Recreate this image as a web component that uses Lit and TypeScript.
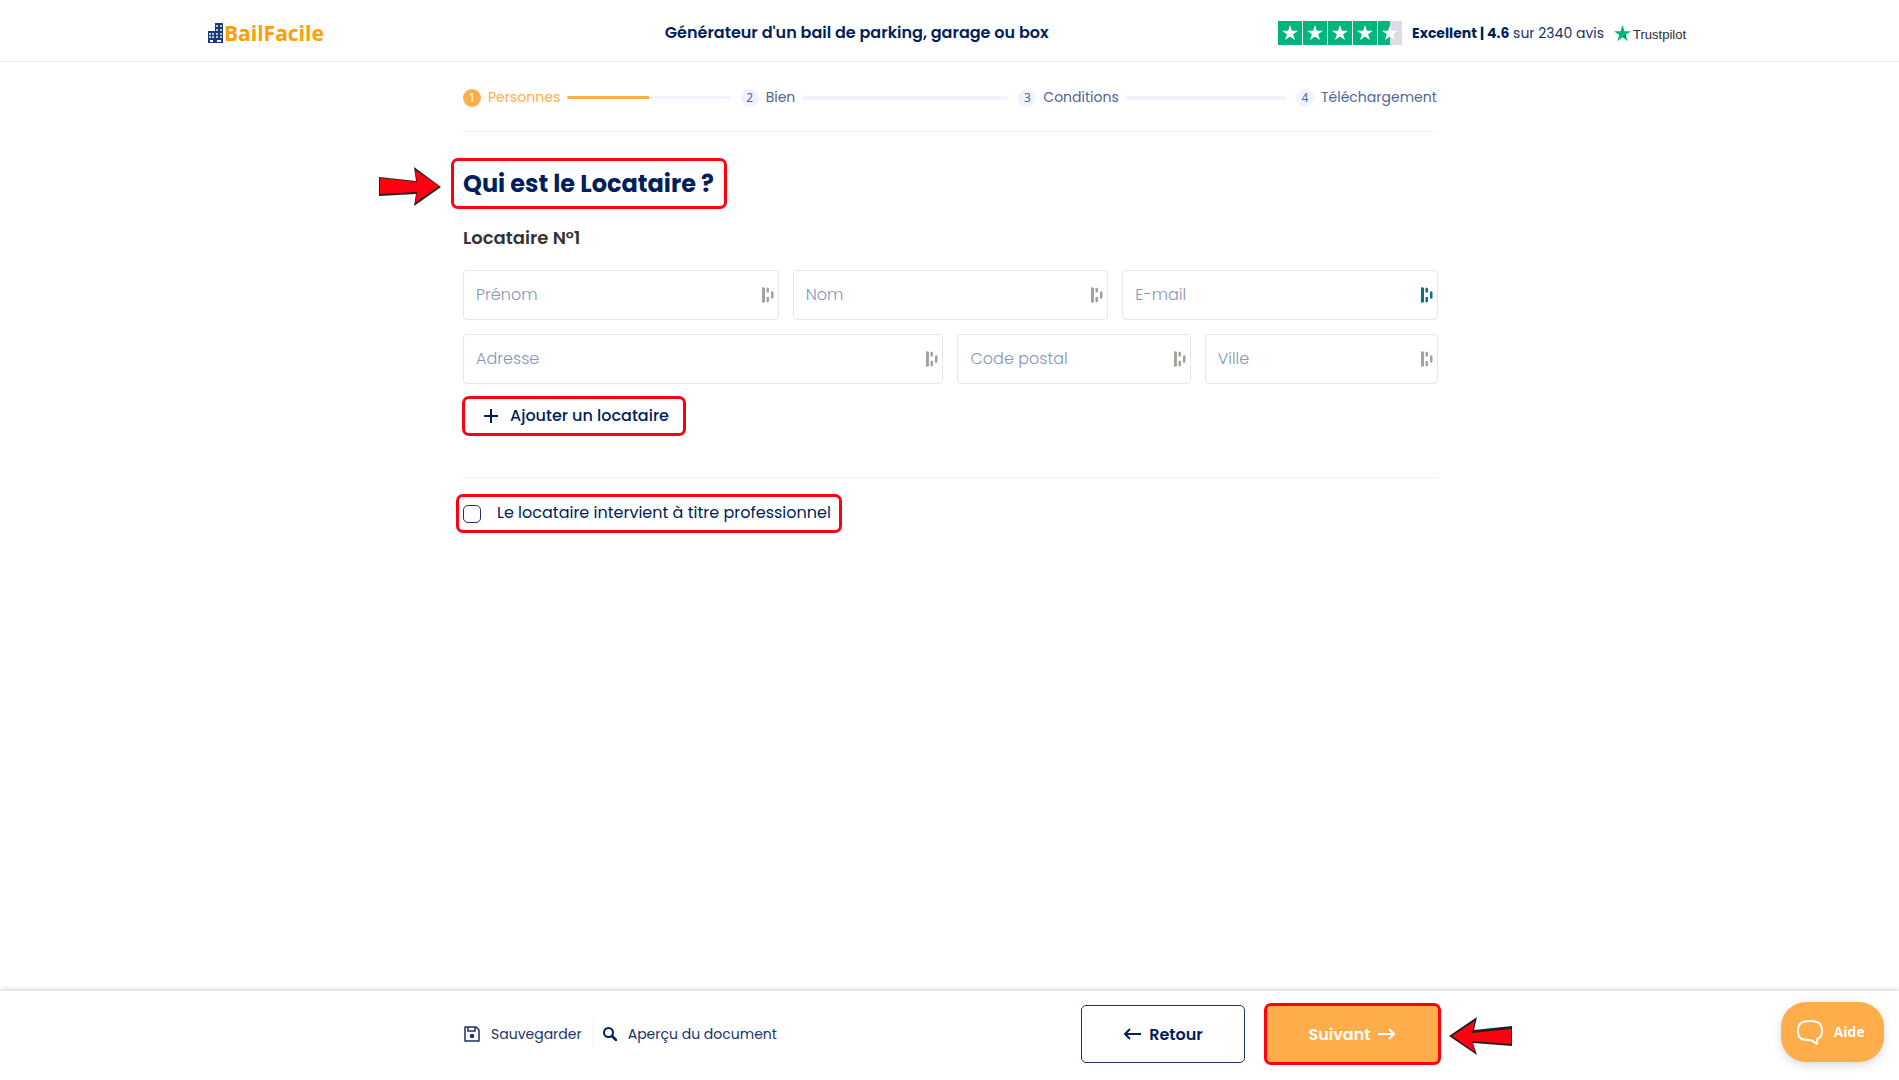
import { LitElement, html, css, svg } from "lit";
import { customElement, property } from "lit/decorators.js";
import { classMap } from "lit/directives/class-map.js";

interface Step {
  label: string;
  progress: number;
}

interface Field {
  id: string;
  label: string;
  span: string;
  type: string;
  active?: boolean;
}

const STEPS: Step[] = [
  { label: "Personnes", progress: 50 },
  { label: "Bien", progress: 0 },
  { label: "Conditions", progress: 0 },
  { label: "Téléchargement", progress: 0 },
];

const FIELDS: Field[] = [
  { id: "prenom", label: "Prénom", span: "third", type: "text" },
  { id: "nom", label: "Nom", span: "third", type: "text" },
  { id: "email", label: "E-mail", span: "third", type: "email", active: true },
  { id: "adresse", label: "Adresse", span: "half", type: "text" },
  { id: "code-postal", label: "Code postal", span: "quarter", type: "text" },
  { id: "ville", label: "Ville", span: "quarter", type: "text" },
];

const STAR = "M12 4l1.900 5.700h6.100l-4.900 3.600 1.900 5.700-5-3.500-5 3.500 1.900-5.700L4 9.700h6.100z";

@customElement("site-header")
export class SiteHeader extends LitElement {
  static styles = css`
    :host {
      display: block;
      border-bottom: 1px solid #e6e6e6;
    }
    .inner {
      display: grid;
      grid-template-columns: 2fr 3fr 3fr;
      align-items: center;
      max-width: 1485px;
      height: 61px;
      margin: 0 auto;
      padding-top: 5px;
      box-sizing: border-box;
    }
    .logo {
      display: inline-flex;
      align-items: center;
      justify-self: start;
      gap: 1px;
      color: #ff9d0a;
      font: 700 21px/24px "Open Sans", sans-serif;
      text-decoration: none;
    }
    .title {
      margin: 0;
      text-align: center;
      color: #001f5c;
      font-size: 16px;
      font-weight: 600;
      line-height: 24px;
      white-space: nowrap;
    }
    .rating {
      display: flex;
      align-items: center;
      justify-content: flex-end;
      padding-right: 6px;
      color: #1b3367;
      font-size: 14px;
      line-height: 24px;
      white-space: nowrap;
    }
    .stars {
      margin-right: 10px;
    }
    .rating strong {
      color: #001f5c;
    }
    .trust {
      display: inline-flex;
      align-items: center;
      gap: 2px;
      margin-left: 10px;
      color: #2c2c32;
      font: 400 13px/20px "Liberation Sans", sans-serif;
    }
    .brand {
      padding-top: 3px;
    }
  `;

  render() {
    return html`
      <header class="inner">
        <a class="logo" href="#">
          <svg width="16" height="20" viewBox="0 0 16 20" aria-hidden="true">
            <path fill="#1d3a72" d="M8 0h8v20H1V8h7z" />
            <path
              fill="#b9c5dc"
              d="M9 2h2v2H9zM13 2h2v2h-2zM9 6h2v2H9zM13 6h2v2h-2zM9 10h2v2H9zM13 10h2v2h-2zM2 10h2v2H2zM5 10h2v2H5zM2 13h2v2H2zM5 13h2v2H5zM9 13h2v2H9zM13 13h2v2h-2z"
            />
            <path fill="#fff" d="M3 17h3v2H3zM10 17h4v2h-4z" />
          </svg>
          <span>BailFacile</span>
        </a>
        <h1 class="title">Générateur d'un bail de parking, garage ou box</h1>
        <div class="rating">
          <svg class="stars" width="124" height="24" viewBox="0 0 124 24" role="img" aria-label="4.6 / 5">
            ${[0, 1, 2, 3, 4].map(
              (i) => svg`<g transform="translate(${i * 25} 0)">
                <path fill=${i === 4 ? "#dcdce6" : "#00b67a"} d="M0 0h24v24H0z" />
                ${i === 4 ? svg`<path fill="#00b67a" d="M0 0h12v24H0z" />` : ""}
                <path fill="#fff" d=${STAR} />
              </g>`
            )}
          </svg>
          <span><strong>Excellent | 4.6</strong> sur 2340 avis</span>
          <span class="trust">
            <svg width="17" height="17" viewBox="0 0 16 16" aria-hidden="true">
              <path fill="#00b67a" d="M8 0l1.900 5.800H16l-4.900 3.600L13 15.200 8 11.600l-5 3.600 1.900-5.800L0 5.800h6.100z" />
              <path fill="#005128" d="M11.500 10.700l-.4-1.300L8 11.600z" />
            </svg>
            <span class="brand">Trustpilot</span>
          </span>
        </div>
      </header>
    `;
  }
}

@customElement("step-bar")
export class StepBar extends LitElement {
  static styles = css`
    .steps {
      display: grid;
      grid-template-columns: repeat(3, 1fr) minmax(142px, auto);
      margin: 0;
      padding: 25px 0 23px;
      border-bottom: 1px solid #f0f3ff;
      list-style: none;
    }
    .step {
      display: flex;
      align-items: center;
      height: 21px;
      color: #4f659a;
      font-size: 14px;
      white-space: nowrap;
    }
    .number {
      width: 18px;
      margin-right: 7px;
      border-radius: 50%;
      background: #f0f3ff;
      font: 12px/18px "Noto Sans", sans-serif;
      text-align: center;
    }
    .bar {
      flex: 1;
      height: 4px;
      margin: 0 10px 0 7px;
      border-radius: 2px;
      background: #f0f3ff;
      overflow: hidden;
    }
    .fill {
      height: 3px;
      background: #ffad4a;
    }
    .current {
      color: #ffad4a;
    }
    .current .number {
      background: #ffad4a;
      color: #fff;
    }
    .current .bar {
      height: 3px;
    }
  `;

  render() {
    return html`
      <ol class="steps">
        ${STEPS.map(
          (s, i) => html`<li class=${classMap({ step: true, current: i === 0 })}>
            <span class="number">${i + 1}</span><span>${s.label}</span>
            ${i < STEPS.length - 1
              ? html`<div class="bar"><div class="fill" style="width:${s.progress}%"></div></div>`
              : ""}
          </li>`
        )}
      </ol>
    `;
  }
}

@customElement("pointer-arrow")
export class PointerArrow extends LitElement {
  @property({ type: Boolean, reflect: true }) left = false;

  static styles = css`
    :host {
      position: absolute;
      pointer-events: none;
    }
    .arrow {
      display: block;
    }
  `;

  render() {
    return this.left
      ? html`<svg class="arrow" width="64" height="40" viewBox="0 0 64 40" aria-hidden="true">
          <path fill="#231f20" d="M0 20L28 1 25 14 63 10V30L24 27l4 12z" />
          <path fill="#ff0013" d="M3 20L26 5 23 17 62 13V28L23 25l3 11z" />
        </svg>`
      : html`<svg class="arrow" width="64" height="40" viewBox="0 0 64 40" aria-hidden="true">
          <path fill="#231f20" d="M1 10L38 14 36 0 63 20 36 39 38 27 1 29z" />
          <path fill="#ff0013" d="M2 11L39 15 37 3 61 19 37 36 39 25 2 27z" />
        </svg>`;
  }
}

@customElement("tenant-form")
export class TenantForm extends LitElement {
  static styles = css`
    .heading {
      position: relative;
      width: fit-content;
      min-width: 276px;
      margin: 26px 0 0 -12px;
      padding: 1px 9px 0;
      box-sizing: border-box;
      border: 3px solid #ff0013;
      border-radius: 7px;
      color: #001f5c;
      font-size: 24px;
      font-weight: 700;
      line-height: 44px;
      white-space: nowrap;
    }
    .pointer {
      right: 100%;
      top: 6px;
      margin-right: 12px;
    }
    .subtitle {
      margin: 17px 0 20px;
      color: #333;
      font-size: 18px;
      font-weight: 600;
      line-height: 24px;
    }
    .fields {
      display: grid;
      grid-template-columns: repeat(12, 1fr);
      gap: 14px;
    }
    .field {
      display: flex;
      align-items: center;
      height: 50px;
      box-sizing: border-box;
      border: 1px solid #e6e6e6;
      border-radius: 4px;
      color: #a6a19c;
    }
    .third {
      grid-column: span 4;
    }
    .half {
      grid-column: span 6;
    }
    .quarter {
      grid-column: span 3;
    }
    .active {
      color: #0e6f80;
    }
    .input {
      flex: 1;
      min-width: 0;
      height: 48px;
      padding: 0 0 2px 12px;
      box-sizing: border-box;
      border: 0;
      outline: 0;
      background: none;
      color: #001f5c;
      font: inherit;
    }
    .input::placeholder {
      color: #8796b5;
      opacity: 1;
      font-weight: 300;
    }
    .manager {
      margin-right: 4px;
    }
    .add {
      display: flex;
      align-items: center;
      gap: 12px;
      min-width: 224px;
      height: 40px;
      margin: 12px 0 0 -1px;
      padding: 0 14px 1px 19px;
      border: 3px solid #ff0013;
      border-radius: 7px;
      background: #fff;
      color: #001f5c;
      font: inherit;
      font-weight: 500;
      white-space: nowrap;
    }
    .rule {
      margin: 41px 0 16px;
      border: 0;
      border-top: 1px solid #f0f3ff;
    }
    .pro {
      display: flex;
      align-items: center;
      gap: 16px;
      width: fit-content;
      min-width: 386px;
      height: 39px;
      margin-left: -7px;
      padding: 0 7px 0 4px;
      box-sizing: border-box;
      border: 3px solid #ff0013;
      border-radius: 7px;
      color: #001f5c;
      font-weight: 400;
      white-space: nowrap;
    }
    .caption {
      padding-bottom: 2px;
    }
    .check {
      appearance: none;
      width: 18px;
      height: 18px;
      margin: 0;
      border: 1px solid #1b3367;
      border-radius: 5px;
      background: #fff;
    }
    .check:checked {
      background: #ffad4a;
    }
  `;

  render() {
    return html`
      <h2 class="heading">
        <pointer-arrow class="pointer"></pointer-arrow>
        Qui est le Locataire ?
      </h2>
      <h3 class="subtitle">Locataire N°1</h3>
      <div class="fields">
        ${FIELDS.map(
          (f) => html`<div class=${classMap({ field: true, [f.span]: true, active: !!f.active })}>
            <input class="input" id=${f.id} type=${f.type} placeholder=${f.label} aria-label=${f.label} />
            <svg class="manager" width="12" height="16" viewBox="0 0 12 16" aria-hidden="true">
              <path
                fill="currentColor"
                d="M0 1l1-1 2 1v14L1 16l-1-1zM4.500 1l1-.5L7 1.500V5.500H4.500zM4.500 10H7v4.500l-1.500 1-1-.5zM9 5l1-1 1.500 1v6L10 12l-1-1z"
              />
            </svg>
          </div>`
        )}
      </div>
      <button class="add" type="button">
        <svg width="14" height="14" viewBox="0 0 14 14" aria-hidden="true">
          <path d="M7 0v14M0 7h14" stroke="#001f5c" stroke-width="2" />
        </svg>
        Ajouter un locataire
      </button>
      <hr class="rule" />
      <label class="pro" for="pro">
        <input class="check" id="pro" type="checkbox" />
        <span class="caption">Le locataire intervient à titre professionnel</span>
      </label>
    `;
  }
}

@customElement("action-bar")
export class ActionBar extends LitElement {
  static styles = css`
    :host {
      display: block;
      background: #fff;
      box-shadow: 0 -1px 5px rgba(0, 0, 0, 0.2);
    }
    .inner {
      display: flex;
      align-items: center;
      max-width: 977px;
      height: 89px;
      margin: 0 auto;
      padding: 0 0 3px 2px;
      box-sizing: border-box;
    }
    .link {
      display: flex;
      align-items: center;
      gap: 11px;
      height: 30px;
      padding: 0;
      border: 0;
      background: none;
      color: #1b3367;
      font: inherit;
      font-size: 14px;
      white-space: nowrap;
    }
    .save {
      padding: 0 11px 0 1px;
      border-right: 1px solid #f0f3ff;
    }
    .preview {
      padding-left: 9px;
    }
    .buttons {
      position: relative;
      display: flex;
      align-items: center;
      gap: 19px;
      margin: 0 -3px 0 auto;
    }
    .button {
      display: flex;
      align-items: center;
      justify-content: center;
      gap: 8px;
      width: 164px;
      height: 58px;
      box-sizing: border-box;
      border: 1px solid #1b3367;
      border-radius: 5px;
      background: #fff;
      color: #001f5c;
      font: inherit;
      font-weight: 600;
    }
    .next {
      width: 177px;
      height: 62px;
      border: 3px solid #ff0013;
      border-radius: 7px;
      background: #ffad4a;
      color: #fff;
    }
    .pointer {
      left: 100%;
      top: 13px;
      margin-left: 8px;
    }
  `;

  render() {
    return html`
      <footer class="inner">
        <button class="link save" type="button">
          <svg width="16" height="16" viewBox="0 0 16 16" fill="none" stroke="#1b3367" stroke-width="1.500" aria-hidden="true">
            <path d="M1 1h11l3 3v11H1z" stroke-linejoin="round" />
            <path d="M4 1v4h7V1" />
            <circle cx="8" cy="10" r="1.500" fill="#1b3367" />
          </svg>
          Sauvegarder
        </button>
        <button class="link preview" type="button">
          <svg width="14" height="14" viewBox="0 0 14 14" fill="none" stroke="#001f5c" stroke-width="2" aria-hidden="true">
            <circle cx="5.500" cy="5.500" r="4.500" />
            <path d="M9 9l4 4" stroke-width="2.500" stroke-linecap="round" />
          </svg>
          Aperçu du document
        </button>
        <div class="buttons">
          <button class="button" type="button">
            <svg width="18" height="12" viewBox="0 0 18 12" fill="none" stroke="#001f5c" stroke-width="2" aria-hidden="true">
              <path d="M7 1L2 6l5 5M2 6h16" />
            </svg>
            Retour
          </button>
          <button class="button next" type="button">
            Suivant
            <svg width="18" height="12" viewBox="0 0 18 12" fill="none" stroke="#fff" stroke-width="2" aria-hidden="true">
              <path d="M11 1l5 5-5 5M16 6H0" />
            </svg>
          </button>
          <pointer-arrow class="pointer" left></pointer-arrow>
        </div>
      </footer>
    `;
  }
}

@customElement("app-root")
export class AppRoot extends LitElement {
  static styles = css`
    :host {
      display: flex;
      flex-direction: column;
      min-height: 100vh;
      background: #fff;
      font-family: Poppins, Inter, sans-serif;
      font-size: 16px;
    }
    .content {
      width: 100%;
      max-width: 977px;
      margin: 0 auto;
      padding-left: 2px;
      box-sizing: border-box;
    }
    .actions {
      position: sticky;
      bottom: 0;
      margin-top: auto;
    }
    .help {
      position: fixed;
      right: 15px;
      bottom: 18px;
      display: flex;
      align-items: center;
      justify-content: center;
      gap: 10px;
      width: 103px;
      height: 60px;
      padding: 0 8px 0 5px;
      border: 0;
      border-radius: 25px;
      background: #ffad4a;
      box-shadow: 0 3px 10px rgba(0, 0, 0, 0.15);
      color: #fff;
      font: 700 14px/20px "Noto Sans", sans-serif;
    }
  `;

  render() {
    return html`
      <site-header></site-header>
      <main class="content">
        <step-bar></step-bar>
        <tenant-form></tenant-form>
      </main>
      <action-bar class="actions"></action-bar>
      <button class="help" type="button">
        <svg width="26" height="26" viewBox="0 0 26 26" fill="none" stroke="#fff" stroke-width="2" stroke-linejoin="round" aria-hidden="true">
          <path d="M13 2C4 2 1 5 1 12c0 7 3 9 11 9 3 0 4 1 8 4v-5c4-1 5-4 5-8 0-7-3-10-12-10z" />
        </svg>
        Aide
      </button>
    `;
  }
}
